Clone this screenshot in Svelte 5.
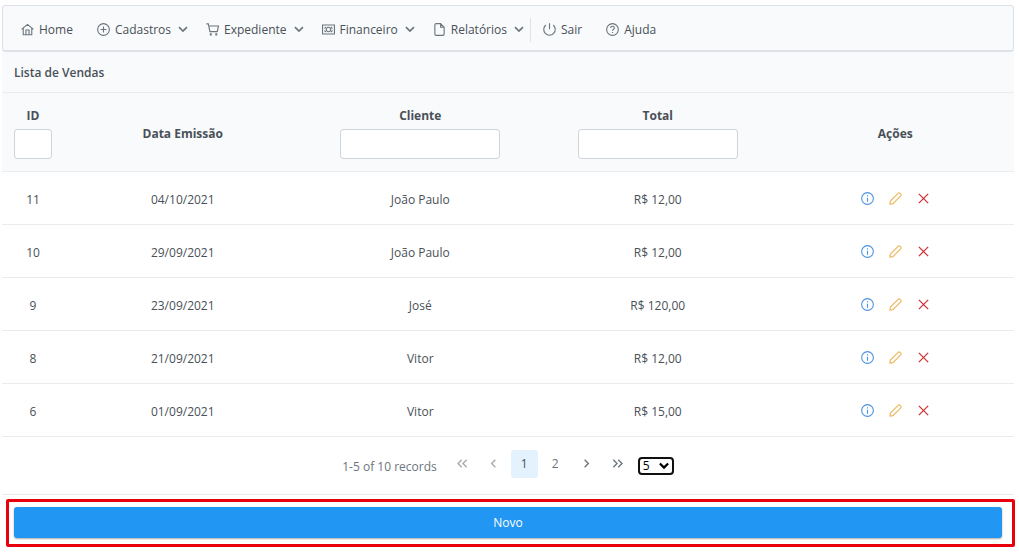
<script>
  const menu = [
    { label: 'Home', icon: 'home' },
    { label: 'Cadastros', icon: 'plus', sub: true },
    { label: 'Expediente', icon: 'cart', sub: true },
    { label: 'Financeiro', icon: 'money', sub: true },
    { label: 'Relatórios', icon: 'file', sub: true },
    { label: 'Sair', icon: 'power', divider: true },
    { label: 'Ajuda', icon: 'help' }
  ];
  const sales = [
    { id: 11, date: '04/10/2021', client: 'João Paulo', total: 'R$ 12,00' },
    { id: 10, date: '29/09/2021', client: 'João Paulo', total: 'R$ 12,00' },
    { id: 9, date: '23/09/2021', client: 'José', total: 'R$ 120,00' },
    { id: 8, date: '21/09/2021', client: 'Vitor', total: 'R$ 12,00' },
    { id: 6, date: '01/09/2021', client: 'Vitor', total: 'R$ 15,00' }
  ];
  const paths = {
    home: 'M.6 6.900 7 1.500l6.400 5.400M2.400 5.600v7h9.200v-7M5.300 12.400V7.500h3.400v4.900',
    plus: 'M7 .7a6.300 6.300 0 1 0 0 12.600A6.300 6.300 0 0 0 7 .7ZM7 3.800v6.400M3.800 7h6.400',
    cart: 'M.4 1h2.100l1.700 8.300h7.900l1.400-6.100H3M4.700 11.600h.9v1.300h-.9zM10.600 11.600h.9v1.300h-.9z',
    money: 'M.6 2.200h12.800v9.600H.6zM7 4.600a2.400 2.400 0 1 0 0 4.800 2.400 2.400 0 0 0 0-4.800ZM2.400 5.600c1 0 1.600-.6 1.600-1.600M11.600 5.600c-1 0-1.600-.6-1.600-1.600M2.400 8.400c1 0 1.600.6 1.600 1.600M11.600 8.400c-1 0-1.600.6-1.600 1.600',
    file: 'M8.200.7H3.400c-.8 0-1.400.6-1.400 1.400v9.800c0 .8.6 1.400 1.400 1.400h7.200c.8 0 1.400-.6 1.400-1.400V4.600L8.200.7v3.900H12',
    power: 'M7 .4v6.400M3 2.200a6.200 6.200 0 1 0 8 0',
    help: 'M7 .7a6.300 6.300 0 1 0 0 12.600A6.300 6.300 0 0 0 7 .7ZM5 5.400c0-1.200.9-1.900 2-1.900s2 .7 2 1.800C9 6.700 7 6.800 7 8.300M7 9.600v1.200',
    info: 'M7 .7a6.300 6.300 0 1 0 0 12.600A6.300 6.300 0 0 0 7 .7ZM7 6.300v4.200M7 3.600v1.200',
    pencil: 'M1 13l.5-3.300L9.800 1.400c.6-.6 1.500-.6 2.100 0l.7.7c.6.6.6 1.500 0 2.100L4.300 12.500z',
    times: 'M2 2l10 10M12 2 2 12',
    down: 'M2.200 4.600 7 9.400l4.800-4.800',
    caret: 'M3.200 4.400 7.500 8.600l4.300-4.200',
    left: 'M9 3 5 7l4 4',
    right: 'M5 3l4 4-4 4',
    first: 'M6.200 3l-4 4 4 4M11.500 3l-4 4 4 4',
    last: 'M7.800 3l4 4-4 4M2.500 3l4 4-4 4'
  };
  let page = $state(1);
  let size = $state('5');
</script>

{#snippet icon(name)}
  <svg class="icon {name}" viewBox="0 0 14 14" aria-hidden="true"><path d={paths[name]} /></svg>
{/snippet}

<div class="page">
  <nav class="menubar">
    {#each menu as item}
      <a href="#{item.icon}" class:sub={item.sub} class:divider={item.divider}>
        {@render icon(item.icon)}
        <span>{item.label}</span>
        {#if item.sub}{@render icon('caret')}{/if}
      </a>
    {/each}
  </nav>

  <main>
    <h1>Lista de Vendas</h1>
    <table>
      <thead>
        <tr>
          <th class="id"><label for="f-id">ID</label><input id="f-id" type="text" /></th>
          <th class="plain">Data Emissão</th>
          <th><label for="f-client">Cliente</label><input id="f-client" type="text" /></th>
          <th><label for="f-total">Total</label><input id="f-total" type="text" /></th>
          <th class="plain">Ações</th>
        </tr>
      </thead>
      <tbody>
        {#each sales as sale}
          <tr>
            <td>{sale.id}</td>
            <td>{sale.date}</td>
            <td>{sale.client}</td>
            <td>{sale.total}</td>
            <td class="tools">
              <div class="actions">
                <button class="blue" aria-label="Detalhes">{@render icon('info')}</button>
                <button class="amber" aria-label="Editar">{@render icon('pencil')}</button>
                <button class="red" aria-label="Excluir">{@render icon('times')}</button>
              </div>
            </td>
          </tr>
        {/each}
      </tbody>
    </table>

    <div class="paginator">
      <span class="records">1-5 of 10 records</span>
      <div class="pages">
        <button disabled aria-label="Primeira">{@render icon('first')}</button>
        <button disabled aria-label="Anterior">{@render icon('left')}</button>
        <button class:current={page === 1} onclick={() => (page = 1)}>1</button>
        <button class:current={page === 2} onclick={() => (page = 2)}>2</button>
        <button aria-label="Próxima">{@render icon('right')}</button>
        <button aria-label="Última">{@render icon('last')}</button>
      </div>
      <div class="size">
        <select bind:value={size} aria-label="Linhas por página">
          <option>5</option>
          <option>10</option>
        </select>
        {@render icon('down')}
      </div>
    </div>
    <div class="highlight"><button class="new">Novo</button></div>
  </main>
</div>

<style>
  :global(body) {
    background: #fff;
  }
  .page {
    box-sizing: border-box;
    padding: 5px 5px 5px 2px;
    font: 12px/18px 'Open Sans', 'Noto Sans', sans-serif;
    color: #495057;
  }
  button,
  input,
  select,
  th,
  td {
    box-sizing: border-box;
    font: inherit;
    color: inherit;
  }
  button {
    display: flex;
    align-items: center;
    justify-content: center;
    border: 0;
    padding: 0;
    background: none;
    cursor: pointer;
  }
  .icon {
    width: 13px;
    height: 13px;
    flex: none;
    fill: none;
    stroke: currentColor;
    stroke-width: 1.2;
  }
  .menubar {
    display: flex;
    align-items: center;
    height: 41px;
    padding: 3px 6px 0;
    background: #f8fafc;
    border: 1px solid #dee2e6;
    border-bottom-width: 2px;
    border-radius: 3px;
  }
  .menubar a {
    display: flex;
    align-items: center;
    gap: 5px;
    height: 24px;
    padding: 0 12px;
    color: #495057;
    text-decoration: none;
  }
  .menubar a.sub {
    padding-right: 5px;
  }
  .menubar a.divider {
    border-left: 1px solid #dee2e6;
  }
  .menubar .icon {
    color: #6c757d;
  }
  .caret {
    stroke-width: 1.8;
  }
  h1 {
    margin: 0;
    padding: 12px 12px 10px;
    font-size: 12px;
    font-weight: 600;
    background: #f8fafc;
    border-bottom: 1px solid #e9ecef;
  }
  table {
    width: 100%;
    table-layout: fixed;
    border-collapse: separate;
    border-spacing: 0;
    text-align: center;
  }
  th {
    height: 79px;
    padding: 1px 12px 0;
    background: #f8fafc;
    font-weight: 700;
    border-bottom: 1px solid #e9ecef;
  }
  th.plain {
    padding-top: 3px;
  }
  th.id {
    width: 62px;
  }
  th label {
    display: block;
    margin-bottom: 4px;
  }
  th input {
    display: block;
    width: 100%;
    max-width: 160px;
    height: 30px;
    margin: 0 auto;
    padding: 4px 6px;
    background: #fff;
    border: 1px solid #ced4da;
    border-radius: 3px;
  }
  td {
    height: 53px;
    padding: 3px 0 0;
    border-bottom: 1px solid #e9ecef;
  }
  td.tools {
    padding: 0;
  }
  .actions {
    display: flex;
    justify-content: center;
    gap: 15px;
  }
  .blue {
    color: #4b93e0;
  }
  .amber {
    color: #edb65c;
  }
  .red {
    color: #cf3339;
  }
  .times {
    stroke-width: 1.4;
  }
  .paginator {
    display: flex;
    align-items: center;
    justify-content: center;
    height: 57px;
    color: #6c757d;
    border-bottom: 1px solid #e9ecef;
  }
  .records {
    padding-top: 2px;
  }
  .pages {
    display: flex;
    gap: 4px;
    margin: 0 7px 4px 12px;
  }
  .pages button {
    width: 27px;
    height: 28px;
    border-radius: 3px;
  }
  .pages button:disabled {
    opacity: 0.6;
  }
  .pages .icon {
    stroke-width: 1.5;
  }
  .pages .current {
    background: #e3f2fd;
    color: #495057;
  }
  .size {
    display: grid;
    align-items: center;
    color: #000;
  }
  .size select,
  .size .icon {
    grid-area: 1 / 1;
  }
  .size select {
    appearance: none;
    width: 36px;
    height: 18px;
    padding: 0 3px;
    line-height: 14px;
    background: #fff;
    border: 2px solid #101010;
    border-radius: 4px;
  }
  .size .icon {
    justify-self: end;
    width: 12px;
    margin-right: 4px;
    stroke-width: 2.6;
    pointer-events: none;
  }
  .highlight {
    margin: 4px -1px 0 4px;
    padding: 5px 10px 6px 5px;
    border: 3px solid #e8000d;
    border-radius: 2px;
  }
  .new {
    width: 100%;
    height: 31px;
    color: #fff;
    background: #2196f3;
    border-radius: 3px;
    box-shadow: 0 1px 2px #00000055;
  }
</style>
